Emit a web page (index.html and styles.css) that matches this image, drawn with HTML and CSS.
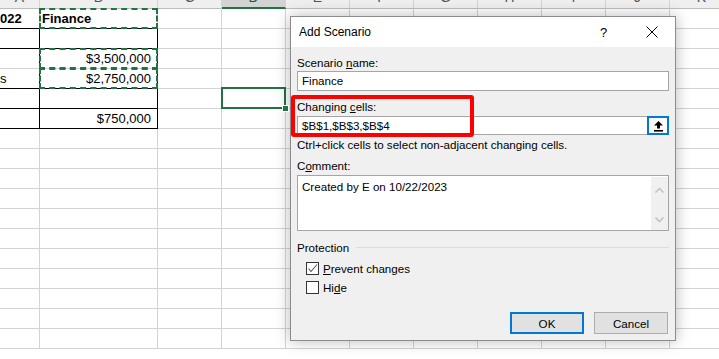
FILE: index.html
```html
<!DOCTYPE html>
<html lang="en">
  <head>
    <meta charset="UTF-8" />
    <title>Add Scenario</title>
    <link rel="stylesheet" href="styles.css">
  </head>
  <body>
    <div class="sheet" id="sheet"></div>

    <div class="dialog">
      <div class="titlebar">
        <span class="title">Add Scenario</span>
        <span class="help">?</span>
        <svg class="close" width="12" height="12" viewBox="0 0 12 12">
          <path d="M0.5 0.5 L11.5 11.5 M11.5 0.5 L0.5 11.5" stroke="#000" stroke-width="1" fill="none" />
        </svg>
      </div>

      <div class="body">
        <div class="lbl first">Scenario <u>n</u>ame:</div>
        <div class="field name">Finance</div>

        <div class="lbl">Changing <u>c</u>ells:</div>
        <div class="field refedit">
          <span>$B$1,$B$3,$B$4</span>
          <span class="collapse">
            <svg width="11" height="12" viewBox="0 0 11 12">
              <path d="M5.5 1 L10 5.5 L7 5.5 L7 8.5 L4 8.5 L4 5.5 L1 5.5 Z" fill="#000" />
              <rect x="1" y="10" width="9" height="1.6" fill="#000" />
            </svg>
          </span>
        </div>
        <p class="hint">Ctrl+click cells to select non-adjacent changing cells.</p>

        <div class="lbl comment">C<u>o</u>mment:</div>
        <div class="field memo">
          <span>Created by E on 10/22/2023</span>
          <div class="scroll">
            <svg width="9" height="6" viewBox="0 0 9 6"><path d="M0.5 5.5 L4.5 1.5 L8.5 5.5" stroke="#bdbdbd" stroke-width="1.4" fill="none" /></svg>
            <svg width="9" height="6" viewBox="0 0 9 6"><path d="M0.5 0.5 L4.5 4.5 L8.5 0.5" stroke="#bdbdbd" stroke-width="1.4" fill="none" /></svg>
          </div>
        </div>

        <div class="group"><span>Protection</span><i></i></div>
        <div class="check first">
          <span class="box">
            <svg width="11" height="11" viewBox="0 0 11 11"><path d="M1.5 5.5 L4 8.5 L10 1.5" stroke="#555" stroke-width="1.1" fill="none" /></svg>
          </span>
          <span><u>P</u>revent changes</span>
        </div>
        <div class="check">
          <span class="box"></span>
          <span>Hi<u>d</u>e</span>
        </div>

        <div class="buttons">
          <button class="ok">OK</button>
          <button>Cancel</button>
        </div>
      </div>

      <div class="mark"></div>
    </div>

    <script>
      const kolonner = ["A", "B", "C", "D", "E", "F", "G", "H", "I", "J", "K"];
      const data = {
        A1: "022",
        B1: "Finance",
        B3: "$3,500,000",
        A4: "s",
        B4: "$2,750,000",
        B6: "$750,000",
      };
      const fed = ["A1", "B1"];
      const tal = ["B3", "B4", "B6"];
      const stiplet = ["B1", "B3", "B4"];
      const sortBund = ["A1", "B1", "A2", "B2", "A4", "B4", "A5", "B5", "A6", "B6"];
      const sortHoejre = ["A2", "A3", "A4", "A5", "A6", "B2", "B3", "B4", "B5", "B6"];

      const sheet = document.querySelector("#sheet");

      kolonner.forEach((k) => {
        const head = document.createElement("div");
        head.className = "colhead";
        if (k == "D") head.classList.add("sel");
        head.innerHTML = "<span>" + k + "</span>";
        sheet.appendChild(head);
      });

      for (let r = 1; r <= 17; r++) {
        kolonner.forEach((k) => {
          const id = k + r;
          const cell = document.createElement("div");
          cell.className = "cell";
          if (data[id]) cell.textContent = data[id];
          if (fed.includes(id)) cell.classList.add("bold");
          if (tal.includes(id)) cell.classList.add("num");
          if (stiplet.includes(id)) cell.classList.add("ants");
          if (sortBund.includes(id)) cell.classList.add("bb");
          if (sortHoejre.includes(id)) cell.classList.add("br");
          if (id == "D5") cell.classList.add("active");
          sheet.appendChild(cell);
        });
      }
    </script>
  </body>
</html>
```

FILE: styles.css
```css
body {
  margin: 0;
  width: 719px;
  height: 359px;
  overflow: hidden;
  position: relative;
  background: #fff;
  font-family: "Liberation Sans", Arial, sans-serif;
}

/* regneark */
.sheet {
  display: grid;
  grid-template-columns: 40px 118px repeat(9, 64px);
  grid-template-rows: 9px;
  grid-auto-rows: 20px;
  font-size: 13px;
  color: #000;
}

.colhead {
  box-sizing: border-box;
  background: #efefef;
  border-right: 1px solid #d4d4d4;
  border-bottom: 1px solid #bdbdbd;
  overflow: hidden;
  text-align: center;
  color: #555;
}

.colhead span {
  display: block;
  margin-top: -13px;
  line-height: 20px;
  font-size: 14px;
}

.colhead.sel {
  background: #d3d3d3;
  border-bottom: 2px solid #217346;
  color: #1e5c38;
}

.cell {
  box-sizing: border-box;
  position: relative;
  border-right: 1px solid #d4d4d4;
  border-bottom: 1px solid #d4d4d4;
  line-height: 20px;
  padding: 0 2px 0 2px;
  white-space: nowrap;
  overflow: visible;
}

.cell:nth-child(11n + 1) {
  padding-left: 0;
}

.bold {
  font-weight: bold;
}

.num {
  text-align: right;
  padding-right: 6px;
}

.bb {
  border-bottom-color: #000;
}

.br {
  border-right-color: #000;
}

.ants::after {
  content: "";
  position: absolute;
  top: -1px;
  left: -1px;
  right: -1px;
  bottom: -1px;
  border: 2px dashed #217346;
}

.active::after {
  content: "";
  position: absolute;
  top: -2px;
  left: -1px;
  right: -1px;
  bottom: -1px;
  border: 2px solid #217346;
}

.active::before {
  content: "";
  position: absolute;
  right: -4px;
  bottom: -4px;
  width: 5px;
  height: 5px;
  background: #217346;
  border: 1px solid #fff;
  z-index: 2;
}

/* dialog */
.dialog {
  position: absolute;
  left: 290px;
  top: 16px;
  width: 386px;
  height: 325px;
  box-sizing: border-box;
  border: 1px solid #8c8c8c;
  background: #f0f0f0;
  box-shadow: 0 0 14px rgba(0, 0, 0, 0.28);
  font-size: 11.6px;
  color: #000;
}

.titlebar {
  display: flex;
  align-items: center;
  height: 30px;
  background: #fff;
  padding: 0 0 0 8px;
}

.title {
  flex: 1;
  font-size: 12px;
}

.help {
  font-size: 13px;
  width: 12px;
  margin-right: 34px;
}

.close {
  margin-right: 17px;
}

.body {
  padding: 0 6px;
}

.lbl {
  line-height: 15px;
  margin-top: 8px;
}

.lbl.first {
  margin-top: 8px;
}

.lbl + .field {
  margin-top: 1px;
}

.refedit {
  margin-top: 2px !important;
}

.field {
  box-sizing: border-box;
  height: 20px;
  border: 1px solid #a5a5a5;
  background: #fff;
  padding: 0 4px;
  line-height: 18px;
}

.refedit {
  display: flex;
  align-items: center;
  height: 19px;
  line-height: 17px;
  padding-right: 0;
}

.refedit span:first-child {
  flex: 1;
}

.collapse {
  box-sizing: border-box;
  display: flex;
  align-items: center;
  justify-content: center;
  width: 22px;
  height: 19px;
  margin: -1px -1px -1px 0;
  border: 2px solid #0078d7;
  background: #fbfbfb;
}

.hint {
  margin: 2px 0 0 0;
  line-height: 15px;
}

.lbl.comment {
  margin-top: 6px;
}

.memo {
  display: flex;
  height: 56px;
  margin-top: 2px !important;
  padding: 3px 0 0 4px;
  line-height: 15px;
}

.memo span {
  flex: 1;
}

.scroll {
  display: flex;
  flex-direction: column;
  justify-content: space-between;
  align-items: center;
  width: 17px;
  margin: -2px 0 0 0;
  height: 53px;
  box-sizing: border-box;
  padding: 10px 0 7px 0;
  background: #f0f0f0;
}

.group {
  display: flex;
  align-items: center;
  gap: 7px;
  margin-top: 9px;
  line-height: 15px;
}

.group i {
  flex: 1;
  height: 1px;
  background: #dcdcdc;
}

.check {
  display: flex;
  align-items: center;
  gap: 4px;
  line-height: 15px;
  margin-top: 4px;
  padding-left: 9px;
}

.check.first {
  margin-top: 6px;
}

.box {
  box-sizing: border-box;
  display: flex;
  align-items: center;
  justify-content: center;
  width: 13px;
  height: 13px;
  border: 1px solid #333;
  background: #fff;
}

.buttons {
  display: flex;
  justify-content: flex-end;
  gap: 10px;
  margin-top: 17px;
  padding-right: 1px;
}

.buttons button {
  box-sizing: border-box;
  width: 74px;
  height: 22px;
  background: #e1e1e1;
  border: 1px solid #adadad;
  font-family: "Liberation Sans", Arial, sans-serif;
  font-size: 11.6px;
  color: #000;
  padding: 0;
}

.buttons .ok {
  border: 2px solid #0078d7;
}

.mark {
  position: absolute;
  left: 0;
  top: 78px;
  width: 183px;
  height: 42px;
  box-sizing: border-box;
  border: 4px solid #ff0000;
  border-radius: 3px;
}
```
